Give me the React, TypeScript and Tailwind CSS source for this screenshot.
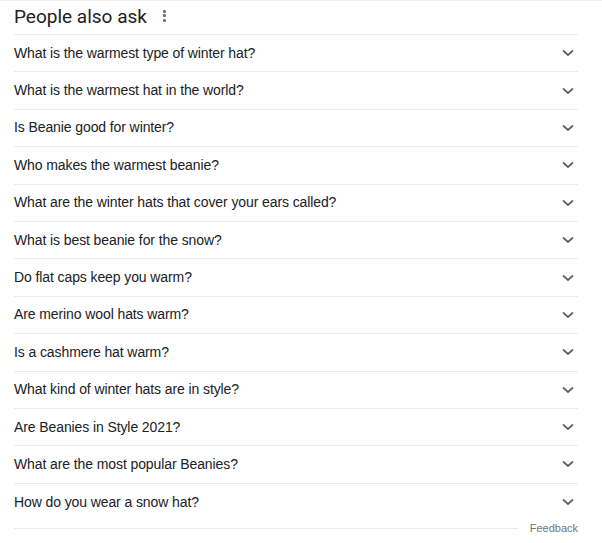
const questions = [
  'What is the warmest type of winter hat?',
  'What is the warmest hat in the world?',
  'Is Beanie good for winter?',
  'Who makes the warmest beanie?',
  'What are the winter hats that cover your ears called?',
  'What is best beanie for the snow?',
  'Do flat caps keep you warm?',
  'Are merino wool hats warm?',
  'Is a cashmere hat warm?',
  'What kind of winter hats are in style?',
  'Are Beanies in Style 2021?',
  'What are the most popular Beanies?',
  'How do you wear a snow hat?',
];

function Chevron() {
  return (
    <svg width="12" height="8" viewBox="0 0 12 8" className="text-[#5f6368]">
      <path d="M1 1.5l5 4.5 5-4.5" fill="none" stroke="currentColor" strokeWidth="1.8" />
    </svg>
  );
}

export default function App() {
  return (
    <div className="w-[602px] h-[543px] bg-white border-t border-[#f1f1f1] font-['Liberation_Sans',Arial,sans-serif] text-[#202124]">
      <div className="pl-[14px] pr-[24px]">
        <div className="h-[33px] flex items-center">
          <h2 className="text-[19px] font-['Roboto',Arial,sans-serif] leading-none pb-[2px]">People also ask</h2>
          <div className="ml-[16px] flex flex-col gap-[1.5px] pb-[4px]">
            <span className="w-[3px] h-[3px] bg-[#70757a] rounded-[1px]" />
            <span className="w-[3px] h-[3px] bg-[#70757a] rounded-[1px]" />
            <span className="w-[3px] h-[3px] bg-[#70757a] rounded-[1px]" />
          </div>
        </div>
        <div className="border-t border-[#ebebeb]">
          {questions.map((q, i) => (
            <div
              key={q}
              className={
                i < questions.length - 1
                  ? 'h-[37.4px] flex items-center justify-between border-b border-[#ebebeb]'
                  : 'h-[37.4px] flex items-center justify-between'
              }
            >
              <span className="text-[14px] tracking-[-0.1px]">{q}</span>
              <span className="mr-[4px] flex items-center">
                <Chevron />
              </span>
            </div>
          ))}
        </div>
        <div className="flex items-center">
          <div className="flex-1 border-t border-[#ebebeb]" />
          <span className="ml-[12px] text-[11px] leading-[14px] text-[#70757a]">Feedback</span>
        </div>
      </div>
    </div>
  );
}
